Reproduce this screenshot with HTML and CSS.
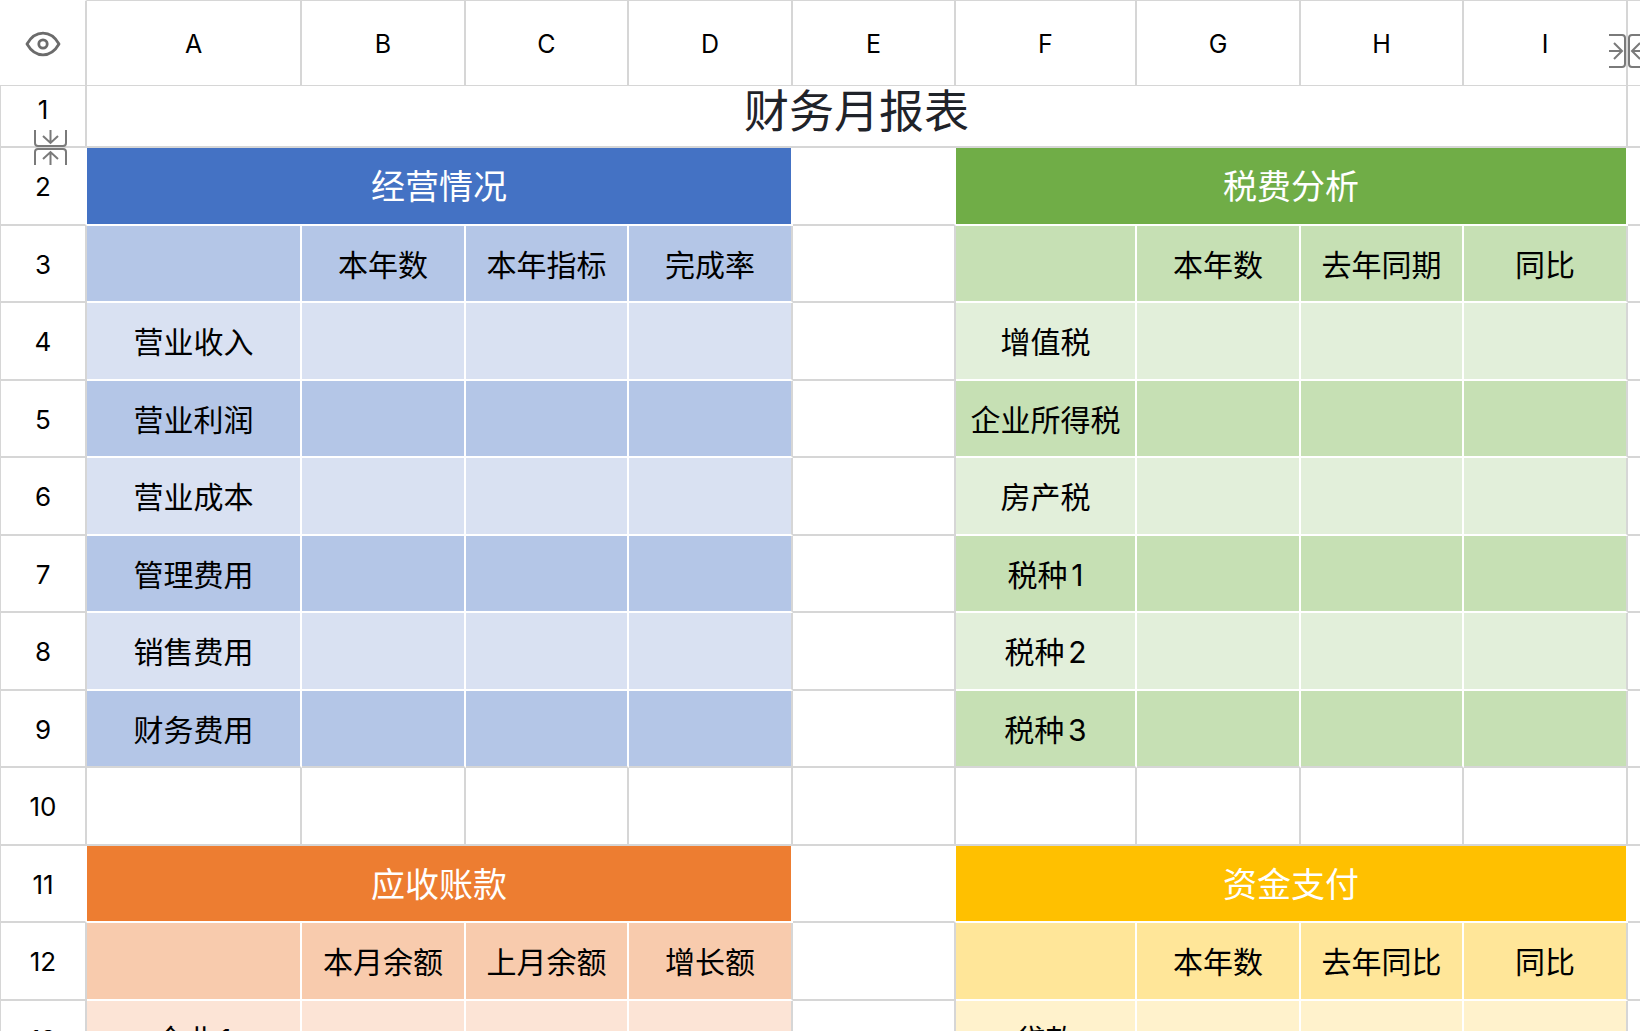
FILE: index.html
```html
<!DOCTYPE html>
<html lang="zh-CN">
<head>
<meta charset="utf-8">
<meta name="viewport" content="width=device-width, initial-scale=1">
<title>财务月报表</title>
<link rel="stylesheet" href="styles.css">
</head>
<body>
<main class="viewport">
<table class="sheet">
<colgroup>
<col class="c-head"><col class="c-a"><col class="c-wide"><col class="c-std"><col class="c-wide"><col class="c-std"><col class="c-f"><col class="c-wide"><col class="c-std"><col class="c-wide"><col>
</colgroup>
<thead>
<tr>
<td class="corner"><button class="icon-btn eye" type="button" aria-label="显示"><svg width="36" height="26" viewBox="0 0 36 26" fill="none" stroke="#6b6b6b" stroke-width="2.800" stroke-linejoin="round"><path d="M2 13C6 6 11.500 2.200 18 2.200S30 6 34 13C30 20 24.500 23.800 18 23.800S6 20 2 13Z"/><circle cx="18" cy="13" r="4.200"/></svg></button></td>
<th scope="col">A</th><th scope="col">B</th><th scope="col">C</th><th scope="col">D</th><th scope="col">E</th><th scope="col">F</th><th scope="col">G</th><th scope="col">H</th>
<th scope="col" class="anchor">I<button class="icon-btn fold-col" type="button" aria-label="列分隔"><svg width="37" height="34" viewBox="0 0 37 34" fill="none" stroke="#7a7a7a" stroke-width="2"><path d="M0 1H13Q16 1 16 4V30Q16 33 13 33H0M0 17H13M5 9L13 17L5 25M37 1H23Q20 1 20 4V30Q20 33 23 33H37M37 17H23M31 9L23 17L31 25"/></svg></button></th>
<th></th>
</tr>
</thead>
<tbody>
<tr class="first"><th scope="row" class="anchor">1<button class="icon-btn fold-row" type="button" aria-label="行分隔"><svg width="33" height="36" viewBox="0 0 33 36" fill="none" stroke="#7a7a7a" stroke-width="2"><path d="M1 0V13Q1 16 4 16H29Q32 16 32 13V0M16.500 0V13M9 6L16.500 13L24 6M1 35V22Q1 19 4 19H29Q32 19 32 22V35M16.500 35V22M9 29L16.500 22L24 29"/></svg></button></th><td class="title" colspan="9">财务月报表</td><td></td></tr>
<tr class="even banner"><th scope="row">2</th><td class="blue head" colspan="4">经营情况</td><td></td><td class="green head" colspan="4">税费分析</td><td></td></tr>
<tr><th scope="row">3</th><td class="blue mid"></td><td class="blue mid">本年数</td><td class="blue mid">本年指标</td><td class="blue mid end">完成率</td><td></td><td class="green mid"></td><td class="green mid">本年数</td><td class="green mid">去年同期</td><td class="green mid end">同比</td><td></td></tr>
<tr class="even"><th scope="row">4</th><td class="blue light">营业收入</td><td class="blue light"></td><td class="blue light"></td><td class="blue light end"></td><td></td><td class="green light">增值税</td><td class="green light"></td><td class="green light"></td><td class="green light end"></td><td></td></tr>
<tr><th scope="row">5</th><td class="blue mid">营业利润</td><td class="blue mid"></td><td class="blue mid"></td><td class="blue mid end"></td><td></td><td class="green mid">企业所得税</td><td class="green mid"></td><td class="green mid"></td><td class="green mid end"></td><td></td></tr>
<tr class="even"><th scope="row">6</th><td class="blue light">营业成本</td><td class="blue light"></td><td class="blue light"></td><td class="blue light end"></td><td></td><td class="green light">房产税</td><td class="green light"></td><td class="green light"></td><td class="green light end"></td><td></td></tr>
<tr><th scope="row">7</th><td class="blue mid">管理费用</td><td class="blue mid"></td><td class="blue mid"></td><td class="blue mid end"></td><td></td><td class="green mid">税种1</td><td class="green mid"></td><td class="green mid"></td><td class="green mid end"></td><td></td></tr>
<tr class="even"><th scope="row">8</th><td class="blue light">销售费用</td><td class="blue light"></td><td class="blue light"></td><td class="blue light end"></td><td></td><td class="green light">税种2</td><td class="green light"></td><td class="green light"></td><td class="green light end"></td><td></td></tr>
<tr class="last"><th scope="row">9</th><td class="blue mid">财务费用</td><td class="blue mid"></td><td class="blue mid"></td><td class="blue mid end"></td><td></td><td class="green mid">税种3</td><td class="green mid"></td><td class="green mid"></td><td class="green mid end"></td><td></td></tr>
<tr class="even"><th scope="row">10</th><td></td><td></td><td></td><td></td><td></td><td></td><td></td><td></td><td></td><td></td></tr>
<tr class="banner"><th scope="row">11</th><td class="orange head" colspan="4">应收账款</td><td></td><td class="gold head" colspan="4">资金支付</td><td></td></tr>
<tr class="even"><th scope="row">12</th><td class="orange mid"></td><td class="orange mid">本月余额</td><td class="orange mid">上月余额</td><td class="orange mid end">增长额</td><td></td><td class="gold mid"></td><td class="gold mid">本年数</td><td class="gold mid">去年同比</td><td class="gold mid end">同比</td><td></td></tr>
<tr><th scope="row">13</th><td class="orange light">企业1</td><td class="orange light"></td><td class="orange light"></td><td class="orange light end"></td><td></td><td class="gold light">贷款</td><td class="gold light"></td><td class="gold light"></td><td class="gold light end"></td><td></td></tr>
</tbody>
</table>
</main>
</body>
</html>
```

FILE: styles.css
```css
:root {
  --line: #d6d6d6;
}

* {
  box-sizing: border-box;
}

body {
  margin: 0;
  background: #fff;
  color: #000;
  font-family: Inter, "Noto Sans CJK SC", sans-serif;
}

/* The sheet scrolls inside the window, without visible scrollbars. */
.viewport {
  height: 100vh;
  overflow: auto;
  scrollbar-width: none;
}

.sheet {
  width: 100%;
  table-layout: fixed;
  border-collapse: separate;
  border-spacing: 0;
}

.c-head { width: 87px; }
.c-a { width: 215px; }
.c-wide { width: 164px; }
.c-std { width: 163px; }
.c-f { width: 181px; }

th,
td {
  height: 77px;
  padding: 2px 0 0;
  border: 0 solid var(--line);
  border-width: 0 2px 2px 0;
  font-size: 30px;
  font-weight: 400;
  line-height: 36px;
  text-align: center;
  vertical-align: middle;
  white-space: nowrap;
  text-autospace: normal;
}

.even > * {
  height: 78px;
}

thead th,
.corner {
  height: 86px;
  border-width: 1px 2px 1px 0;
  font-size: 25px;
}

.corner {
  border-top-color: transparent;
}

tbody th {
  border-left-width: 1px;
  font-size: 26px;
}

.first > * {
  height: 62px;
  padding: 0 0 12px;
}

.first > .title {
  padding-bottom: 8px;
  color: #1f2329;
  font-size: 45px;
  line-height: 48px;
}

tr > :last-child {
  border-right-width: 0;
}

/* Table blocks */
.head {
  color: #fff;
  font-size: 34px;
}

.banner > * {
  border-right-color: #fff;
}

.head,
.mid,
.light {
  border-color: #fff;
}

.end,
.end + td {
  border-right-color: var(--line);
}

.last > * {
  border-bottom-color: var(--line);
}

.blue.head { background: #4472c4; }
.blue.mid { background: #b4c6e7; }
.blue.light { background: #d9e1f2; }
.green.head { background: #70ad47; }
.green.mid { background: #c6e0b4; }
.green.light { background: #e2efda; }
.orange.head { background: #ed7d31; }
.orange.mid { background: #f8cbad; }
.orange.light { background: #fce4d6; }
.gold.head { background: #ffc000; }
.gold.mid { background: #ffe699; }
.gold.light { background: #fff2cc; }

/* Icons */
.icon-btn {
  padding: 0;
  border: 0;
  background: none;
}

.icon-btn svg {
  display: block;
}

.eye {
  display: block;
  margin: 0 auto;
}

.anchor {
  position: relative;
}

.fold-row {
  position: absolute;
  z-index: 1;
  left: 33px;
  bottom: -20px;
}

.fold-col {
  position: absolute;
  z-index: 1;
  top: 33px;
  right: -20px;
}
```
